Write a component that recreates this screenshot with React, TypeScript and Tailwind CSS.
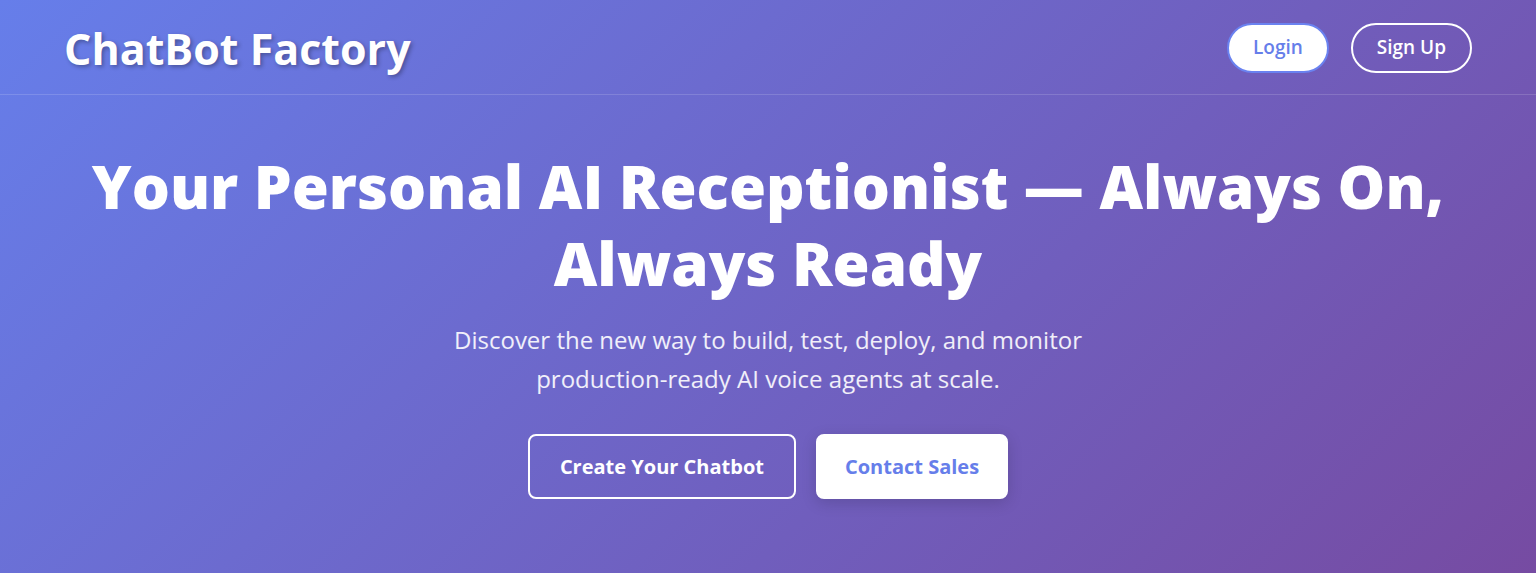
import React from 'react'

const font = { fontFamily: '"Open Sans", "Noto Sans", sans-serif' }

export default function App() {
  return (
    <div
      className="min-h-[573px] w-full bg-[linear-gradient(135deg,#667eea_0%,#764ba2_100%)] text-white"
      style={font}
    >
      {/* Header */}
      <header className="flex h-[95px] items-center justify-between border-b border-white/15 px-16">
        <h1 className="pt-[4px] text-[43px] font-bold leading-[50px] [text-shadow:2px_2px_4px_rgba(0,0,0,0.3)]">
          ChatBot Factory
        </h1>
        <nav className="flex items-center gap-[22px] pt-[1px]">
          <button className="h-[50px] rounded-full border-2 border-[#6a82f0] bg-white px-[24px] text-[19px] font-semibold text-[#667eea]">
            Login
          </button>
          <button className="h-[50px] rounded-full border-2 border-white px-[24px] text-[19px] font-semibold text-white">
            Sign Up
          </button>
        </nav>
      </header>

      {/* Hero */}
      <section className="flex flex-col items-center px-8 pt-[53px] text-center">
        <h2 className="max-w-[1400px] text-[60px] font-extrabold leading-[77px]">
          Your Personal AI Receptionist — Always On, Always Ready
        </h2>
        <p className="mt-[18px] max-w-[660px] text-[24px] leading-[39px] text-white/90">
          Discover the new way to build, test, deploy, and monitor production-ready AI voice agents at scale.
        </p>
        <div className="mt-[36px] flex gap-[20px]">
          <button className="h-[65px] rounded-lg border-2 border-white px-[30px] text-[20px] font-bold text-white">
            Create Your Chatbot
          </button>
          <button className="h-[65px] rounded-lg border-2 border-white bg-white px-[27px] text-[20px] font-bold text-[#667eea] shadow-[0_4px_15px_rgba(0,0,0,0.15)]">
            Contact Sales
          </button>
        </div>
      </section>
    </div>
  )
}
